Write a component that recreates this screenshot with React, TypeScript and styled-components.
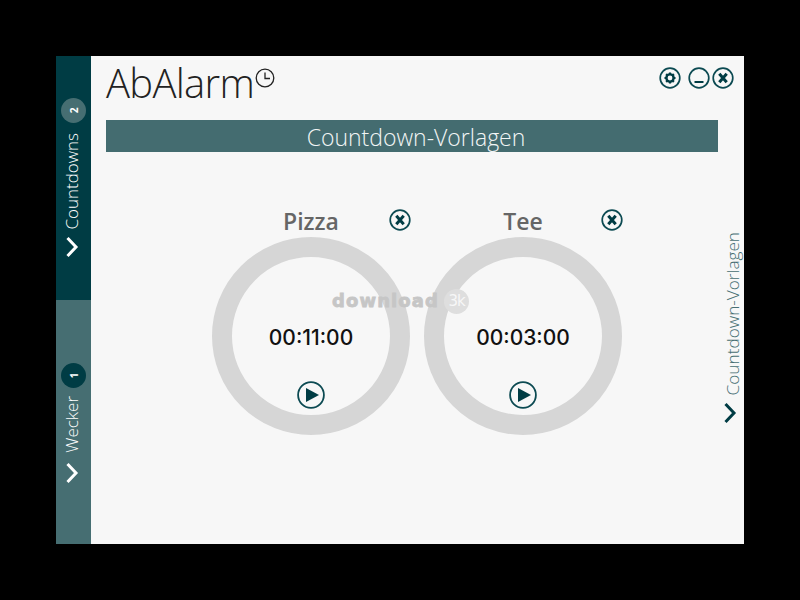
import React from "react";
import styled, { createGlobalStyle } from "styled-components";

const dark = "#003c44";
const muted = "#466e72";

const GlobalStyle = createGlobalStyle`
  html, body {
    margin: 0;
    padding: 0;
    height: 100%;
    background: #000;
    font-family: "Open Sans", "Liberation Sans", sans-serif;
  }
`;

const Stage = styled.div`
  width: 800px;
  height: 600px;
  padding: 56px;
  box-sizing: border-box;
`;

const Window = styled.div`
  position: relative;
  display: flex;
  width: 688px;
  height: 488px;
  background: #f7f7f7;
  overflow: hidden;
`;

const Sidebar = styled.div`
  display: flex;
  flex-direction: column;
  width: 35px;
  flex: none;
`;

const Tab = styled.div<{ $active?: boolean }>`
  height: 244px;
  padding-top: ${(p) => (p.$active ? 42 : 63)}px;
  box-sizing: border-box;
  background: ${(p) => (p.$active ? dark : muted)};
  display: flex;
  flex-direction: column;
  align-items: center;
  color: #fff;
`;

const Badge = styled.div<{ $active?: boolean }>`
  width: 25px;
  height: 25px;
  border-radius: 50%;
  background: ${(p) => (p.$active ? muted : dark)};
  color: #fff;
  font-size: 10px;
  font-weight: 700;
  display: flex;
  align-items: center;
  justify-content: center;
  transform: rotate(-90deg);
`;

const VerticalLabel = styled.div`
  writing-mode: vertical-rl;
  transform: rotate(180deg);
  font-size: 17px;
  font-weight: 300;
  line-height: 20px;
  white-space: nowrap;
`;

const TabLabel = styled(VerticalLabel)<{ $gap: number }>`
  margin: ${(p) => p.$gap}px 3px 0 0;
`;

const RailLabel = styled(VerticalLabel)`
  font-size: 17.2px;
  color: ${muted};
  margin-left: 5px;
`;

const Chevron = styled.svg<{ $gap: number }>`
  display: block;
  width: 14px;
  height: 22px;
  margin: ${(p) => p.$gap}px 4px 0 0;
  flex: none;
`;

const RailChevron = styled(Chevron)`
  margin-right: 0;
`;

const Main = styled.div`
  flex: 1;
  min-width: 0;
  display: flex;
  flex-direction: column;
`;

const Header = styled.div`
  height: 64px;
  display: flex;
  justify-content: space-between;
  padding: 0 10px 0 15px;
`;

const TitleWrap = styled.div`
  display: flex;
  align-items: flex-start;
  color: #222;
`;

const Title = styled.h1`
  margin: 1px 0 0;
  font-size: 40px;
  font-weight: 300;
  line-height: 52px;
  letter-spacing: -0.7px;
`;

const ClockIcon = styled.svg`
  width: 20px;
  height: 20px;
  margin: 12px 0 0 1px;
`;

const WindowButtons = styled.div`
  display: flex;
  gap: 2px;
  padding-top: 11px;
`;

const GearSlot = styled.div`
  margin-right: 5px;
`;

const RoundIcon = styled.svg<{ $size?: number }>`
  display: block;
  width: ${(p) => p.$size ?? 22}px;
  height: ${(p) => p.$size ?? 22}px;
`;

const Body = styled.div`
  flex: 1;
  display: flex;
  min-height: 0;
`;

const Content = styled.div`
  flex: 1;
  min-width: 0;
  padding-left: 15px;
`;

const Band = styled.div`
  width: 612px;
  height: 32px;
  box-sizing: border-box;
  padding-left: 8px;
  background: #446c70;
  color: #f2f5f5;
  font-size: 23px;
  font-weight: 300;
  line-height: 34px;
  text-align: center;
`;

const Cards = styled.div`
  display: flex;
  gap: 14px;
  margin: 57px 0 0 106px;
`;

const Card = styled.div`
  width: 198px;
`;

const CardHeader = styled.div`
  display: grid;
  grid-template-columns: 1fr auto 1fr;
  align-items: start;
  height: 27px;
  margin-bottom: 1px;
`;

const CardName = styled.div`
  grid-column: 2;
  font-size: 23px;
  font-weight: 600;
  line-height: 28px;
  color: #666;
  margin-top: -2px;
`;

const CardClose = styled.div`
  grid-column: 3;
  justify-self: end;
  margin: 0 -1px 0 0;
`;

const Ring = styled.div`
  width: 198px;
  height: 198px;
  box-sizing: border-box;
  border: 20px solid #d6d6d6;
  border-radius: 50%;
  display: flex;
  flex-direction: column;
  align-items: center;
  padding-top: 66px;
`;

const Time = styled.div`
  font-family: Inter, "Open Sans", sans-serif;
  font-size: 21px;
  font-weight: 500;
  line-height: 30px;
  color: #111;
`;

const Play = styled.div`
  margin-top: 28px;
`;

const RightRail = styled.div`
  width: 28px;
  flex: none;
  display: flex;
  flex-direction: column;
  align-items: center;
  padding-top: 112px;
`;

const Watermark = styled.div`
  position: absolute;
  left: 276px;
  top: 232px;
  display: flex;
  align-items: center;
  gap: 5px;
  color: #c6c6c6;
  font-family: "DejaVu Sans", sans-serif;
  font-size: 18px;
  font-weight: 700;
  letter-spacing: 1.1px;
  line-height: 26px;
  -webkit-text-stroke: 0.8px #c6c6c6;
`;

const WatermarkBadge = styled.div`
  width: 25px;
  height: 25px;
  border-radius: 50%;
  background: #dedede;
  color: #f7f7f7;
  font-size: 15px;
  font-weight: 400;
  letter-spacing: -1px;
  line-height: 25px;
  text-align: center;
  -webkit-text-stroke: 0;
`;

const chevronPath = "M2.5 2 L11 11 L2.5 20";

const CloseIcon = () => (
  <RoundIcon viewBox="0 0 22 22">
    <circle cx="11" cy="11" r="9.8" fill="none" stroke="#0c4a52" strokeWidth="1.7" />
    <path d="M7.3 6.8 L14.7 15.2 M14.7 6.8 L7.3 15.2" stroke={dark} strokeWidth="3" />
  </RoundIcon>
);

const MinimizeIcon = () => (
  <RoundIcon viewBox="0 0 22 22">
    <circle cx="11" cy="11" r="9.8" fill="none" stroke="#0c4a52" strokeWidth="1.7" />
    <path d="M6.5 15 H15.5" stroke={dark} strokeWidth="2" />
  </RoundIcon>
);

const GearIcon = () => (
  <RoundIcon viewBox="0 0 22 22">
    <circle cx="11" cy="11" r="9.8" fill="none" stroke="#0c4a52" strokeWidth="1.7" />
    <circle cx="11" cy="11" r="3.6" fill="none" stroke={dark} strokeWidth="2.4" />
    <path
      d="M11 5.5 V7.5 M11 14.5 V16.5 M5.5 11 H7.5 M14.5 11 H16.5 M7.1 7.1 L8.5 8.5 M13.5 13.5 L14.9 14.9 M14.9 7.1 L13.5 8.5 M8.5 13.5 L7.1 14.9"
      stroke={dark}
      strokeWidth="2.2"
    />
  </RoundIcon>
);

const PlayIcon = () => (
  <RoundIcon $size={28} viewBox="0 0 28 28">
    <circle cx="14" cy="14" r="12.9" fill="none" stroke="#0c4a52" strokeWidth="1.8" />
    <path d="M9 7 L22 14 L9 21 Z" fill={dark} />
  </RoundIcon>
);

const templates = [
  { name: "Pizza", time: "00:11:00" },
  { name: "Tee", time: "00:03:00" },
];

const App: React.FC = () => {
  return (
    <Stage>
      <GlobalStyle />
      <Window>
        <Sidebar>
          <Tab $active>
            <Badge $active>2</Badge>
            <TabLabel $gap={10}>Countdowns</TabLabel>
            <Chevron $gap={6} viewBox="0 0 14 22">
              <path d={chevronPath} fill="none" stroke="#fff" strokeWidth="3" />
            </Chevron>
          </Tab>
          <Tab>
            <Badge>1</Badge>
            <TabLabel $gap={8}>Wecker</TabLabel>
            <Chevron $gap={9} viewBox="0 0 14 22">
              <path d={chevronPath} fill="none" stroke="#fff" strokeWidth="3" />
            </Chevron>
          </Tab>
        </Sidebar>
        <Main>
          <Header>
            <TitleWrap>
              <Title>AbAlarm</Title>
              <ClockIcon viewBox="0 0 20 20">
                <circle cx="10" cy="10" r="8.8" fill="none" stroke="#222" strokeWidth="1.3" />
                <path d="M10 4.5 V10.5 H15" fill="none" stroke="#222" strokeWidth="1.3" />
              </ClockIcon>
            </TitleWrap>
            <WindowButtons>
              <GearSlot>
                <GearIcon />
              </GearSlot>
              <MinimizeIcon />
              <CloseIcon />
            </WindowButtons>
          </Header>
          <Body>
            <Content>
              <Band>Countdown-Vorlagen</Band>
              <Cards>
                {templates.map((t) => (
                  <Card key={t.name}>
                    <CardHeader>
                      <CardName>{t.name}</CardName>
                      <CardClose>
                        <CloseIcon />
                      </CardClose>
                    </CardHeader>
                    <Ring>
                      <Time>{t.time}</Time>
                      <Play>
                        <PlayIcon />
                      </Play>
                    </Ring>
                  </Card>
                ))}
              </Cards>
            </Content>
            <RightRail>
              <RailLabel>Countdown-Vorlagen</RailLabel>
              <RailChevron $gap={7} viewBox="0 0 14 22">
                <path d={chevronPath} fill="none" stroke={dark} strokeWidth="3" />
              </RailChevron>
            </RightRail>
          </Body>
        </Main>
        <Watermark>
          download
          <WatermarkBadge>3k</WatermarkBadge>
        </Watermark>
      </Window>
    </Stage>
  );
};

export default App;
